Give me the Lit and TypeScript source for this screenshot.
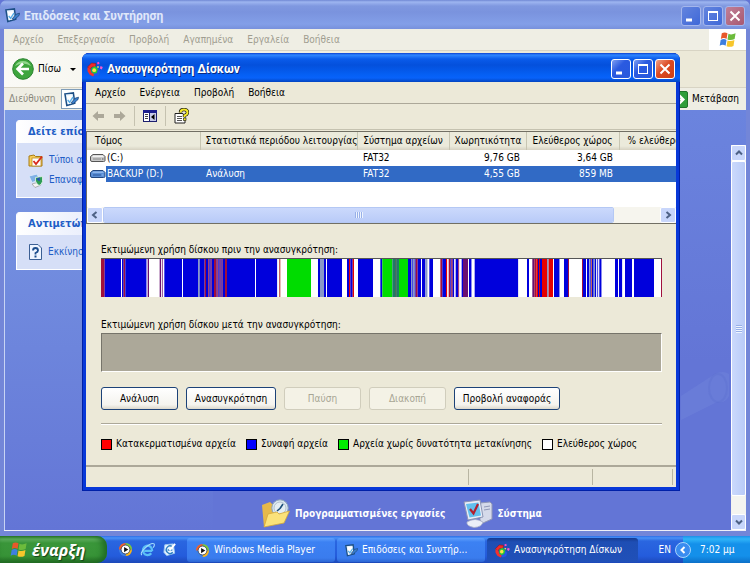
import { LitElement, html, css, svg, nothing, TemplateResult } from "lit";
import { customElement, property } from "lit/decorators.js";

/* ---------- shared look ---------- */

const base = css`
  * { box-sizing: border-box; }
  button {
    font: inherit;
    color: inherit;
    background: none;
    border: 0;
    padding: 0;
    margin: 0;
    white-space: nowrap;
  }
  svg { display: block; flex: none; }
`;

/* ---------- icons ---------- */

const flag = (size: number) => html`<svg width=${size} height=${size} viewBox="0 0 20 20">
  <path d="M4 3.5Q7 1.5 10 3.5L9 9.5Q6 7.500 3 9.500Z" fill="#e8582a" />
  <path d="M11 4Q14 5.500 18.500 3.500L17.500 9.500Q13.500 11.500 10 10Z" fill="#6cbb3c" />
  <path d="M2.800 10.500Q6 8.500 9 10.500L8 16.500Q5 14.500 1.800 16.500Z" fill="#3f7fe0" />
  <path d="M10 11Q13 12.500 17.300 10.500L16.300 16.800Q12.500 18.500 9 17Z" fill="#f7c62c" />
</svg>`;

const perfIcon = (size: number) => html`<svg width=${size} height=${size} viewBox="0 0 16 16">
  <path d="M1 2L10 1L11.500 12L3 14.500Z" fill="#e4f1fc" stroke="#1c4f86" stroke-width="1.600" />
  <path d="M3 4L8.500 3.500L9.500 11.500L4.500 13Z" fill="#fff" />
  <path d="M4 8.500L6 11L9.500 5.500" fill="none" stroke="#58aee8" stroke-width="1.500" />
  <path d="M7.500 11.500L12 6.500L15.500 5.500L15 8L10 12.500Z" fill="#3b7ecb" stroke="#163e70" stroke-width=".7" />
</svg>`;

const defragIcon = (size: number) => html`<svg width=${size} height=${size} viewBox="0 0 16 16">
  <path d="M4.500 2L9 2.500L8.500 6L5 6L3 8.500L.5 6Z" fill="#f02a2a" stroke="#8a1010" stroke-width=".5" />
  <path d="M.5 6.500L3.500 8L4.500 11.500L8 13L6 15.500L2.500 13.500L.5 10Z" fill="#f4322c" />
  <path d="M4.500 7L8 5L11 8L10 12L7 13L4.500 11Z" fill="#25c936" />
  <path d="M6.500 13L10 12L11 8.500L13 10L12 14L8 15.500Z" fill="#2456e8" />
  <circle cx="7.200" cy="9.200" r="1.900" fill="#ffe04a" />
  <path d="M10 1.500L12 .8L12.500 3L10.500 3.500Z" fill="#ff49c8" />
  <path d="M13.500 5L15.800 6L14.800 8.500L12.800 7.500Z" fill="#f45ad0" />
  <path d="M10.500 5L12 5.500L11.500 7L10 6.500Z" fill="#ffe04a" />
</svg>`;

const driveIcon = (selected: boolean) => html`<svg width="16" height="12" viewBox="0 0 16 12">
  <path d="M3 2.500H13L15 4.500V8.500Q15 9.500 13.500 9.500H2Q.5 9.500 .5 8V4.500Z"
    fill=${selected ? "#5b8fd6" : "#c9c9c9"} stroke=${selected ? "#23477e" : "#555"} />
  <path d="M3.200 3.500H12.800L14 5H2Z" fill=${selected ? "#8fb6ea" : "#f1f1f1"} />
  <path d="M3 7H11" stroke=${selected ? "#2c569a" : "#8a8a8a"} />
  <path d="M12 7H13.500" stroke=${selected ? "#8fb6ea" : "#555"} />
</svg>`;

const mediaIcon = (size: number) => html`<svg width=${size} height=${size} viewBox="0 0 16 16">
  <path d="M8 1A7 7 0 0 1 15 8H8Z" fill="#7cc83c" />
  <path d="M15 8A7 7 0 0 1 8 15V8Z" fill="#f7b51c" />
  <path d="M8 15A7 7 0 0 1 1 8H8Z" fill="#3c7fe6" />
  <path d="M1 8A7 7 0 0 1 8 1V8Z" fill="#f0602a" />
  <circle cx="8" cy="8" r="4.700" fill="#fff" stroke="#24324e" stroke-width=".8" />
  <path d="M6.500 5.200L11 8L6.500 10.800Z" fill="#111" />
</svg>`;

const ieIcon = html`<svg width="15" height="15" viewBox="0 0 16 16">
  <path d="M13 9.500H4.500M13 9.500A5 5 0 1 0 12 12" fill="none" stroke="#5cc0f6" stroke-width="2.300" />
  <path d="M2 14Q-.5 12 6 6Q12 .5 15 2Q16 3.500 14 6" fill="none" stroke="#a8defc" stroke-width="1.100" />
</svg>`;

const desktopIcon = html`<svg width="15" height="15" viewBox="0 0 16 16">
  <path d="M3 3L12 2L13.500 12L5 14.500L2 11Z" fill="#e9f4ff" stroke="#9cc8f0" />
  <path d="M11 5A4 4 0 1 0 11.500 11M6 8.500H11" fill="none" stroke="#2b7fc4" stroke-width="1.500" />
  <path d="M8 9L14 2" stroke="#fff" stroke-width="2" />
</svg>`;

const backIcon = html`<svg width="22" height="22" viewBox="0 0 22 22">
  <circle cx="11" cy="11" r="10.300" fill="#3da53d" stroke="#2b8430" />
  <path d="M3 8A9 9 0 0 1 19 8Q11 3 3 8Z" fill="#8fd68a" />
  <path d="M11 5.500L5.500 11L11 16.500M6 11H17" fill="none" stroke="#fff" stroke-width="2.600" />
</svg>`;

const goIcon = html`<svg width="20" height="17" viewBox="0 0 20 17">
  <rect x=".5" y=".5" width="19" height="16" rx="1.500" fill="#2f9e3a" stroke="#1f7428" />
  <path d="M6 8.500H15M11 4L15.500 8.500L11 13" fill="none" stroke="#fff" stroke-width="2.200" />
</svg>`;

const arrow = (flip: boolean) => html`<svg width="13" height="12" viewBox="0 0 13 12">
  <path d=${flip ? "M7 1L12.500 6L7 11V8H1V4H7Z" : "M6 1L.5 6L6 11V8H12V4H6Z"} fill="#aca899" />
</svg>`;

const paneIcon = html`<svg width="14" height="12" viewBox="0 0 14 12">
  <rect x=".5" y=".5" width="13" height="11" fill="#fff" stroke="#1c1f6e" />
  <path d="M0 1.500H14" stroke="#1c1f8e" stroke-width="3" />
  <path d="M6.500 2V12" stroke="#1c1f6e" />
  <path d="M2 4.500H5M2 6.500H5M2 8.500H5" stroke="#444" />
  <rect x="7" y="3" width="6" height="8" fill="#c8cbe8" />
  <path d="M11.500 4V10L8 7Z" fill="#000" />
</svg>`;

const helpIcon = html`<svg width="15" height="16" viewBox="0 0 15 16">
  <path d="M1 5.500H9L11 8V15H1Z" fill="#fff" stroke="#222" />
  <path d="M3 8.500H8M3 10.500H8M3 12.500H8" stroke="#555" />
  <path d="M6.500 4.500Q6.500 1.500 10 1.500T13.500 4.500Q13.500 6.500 10.500 7.500V9" fill="none" stroke="#111" stroke-width="3.400" />
  <path d="M6.500 4.500Q6.500 1.500 10 1.500T13.500 4.500Q13.500 6.500 10.500 7.500V9" fill="none" stroke="#f5ea2a" stroke-width="2" />
  <rect x="9.500" y="10" width="2.500" height="2.500" fill="#f5ea2a" stroke="#111" stroke-width=".6" />
</svg>`;

const folderCheck = html`<svg width="16" height="15" viewBox="0 0 16 15">
  <path d="M1 3L6 2L7.500 3.500H14V13H1Z" fill="#f7cf5c" stroke="#a87c16" />
  <rect x="4" y="5" width="9" height="8" fill="#fff" stroke="#b98b25" stroke-width=".8" />
  <path d="M5.500 8L8 11L14 3.500" fill="none" stroke="#d8281c" stroke-width="1.800" />
</svg>`;

const restoreIcon = html`<svg width="16" height="15" viewBox="0 0 16 15">
  <path d="M1 3L9 1L12 7L4 9.500Z" fill="#7fb0e6" stroke="#d8e6fa" />
  <path d="M4 11L11 9L13 12L7 14.500Z" fill="#f4f4f4" stroke="#888" stroke-width=".6" />
  <path d="M7.500 4.500L14.500 3.500V8.500Q13.500 12 11 12.500Q8 10.500 7.500 8Z" fill="#2d9c56" stroke="#e8f4ec" stroke-width=".8" />
  <path d="M9 6.500L11 5.500V8" fill="none" stroke="#2450b8" stroke-width="1.500" />
</svg>`;

const questionIcon = html`<svg width="15" height="16" viewBox="0 0 15 16">
  <path d="M1.500 .5H10L13.500 4V15.500H1.500Z" fill="#eef4ff" stroke="#3b5f94" />
  <path d="M5 6.500Q5 4 7.500 4T10 6.500Q10 8 7.500 9V10.500" fill="none" stroke="#1b4c8c" stroke-width="1.800" />
  <rect x="6.500" y="11.500" width="2" height="2" fill="#1b4c8c" />
</svg>`;

const tasksIcon = html`<svg width="30" height="30" viewBox="0 0 30 30">
  <path d="M1 6L9 3L11 5L16 4L18 20L3 28Z" fill="#e6b94a" />
  <circle cx="19" cy="9" r="8.200" fill="#dbe8f2" stroke="#8aa3b8" />
  <circle cx="19" cy="9" r="6" fill="#e4eef4" stroke="#a6b6c4" stroke-width=".8" />
  <path d="M19 9.500L22 5M19 9.500L16 12" stroke="#1c4f78" stroke-width="1.600" />
  <path d="M3 28L7 15L16 13L18 15L28.500 12L23 24Z" fill="#fbe27a" stroke="#d6a838" stroke-width=".8" />
</svg>`;

const systemIcon = html`<svg width="30" height="30" viewBox="0 0 30 30">
  <path d="M17 4L27 3L29 5V20L20 24L17 21Z" fill="#d5daea" stroke="#8f97b6" />
  <path d="M21 8L27 7M21 11L27 10" stroke="#8f97b6" />
  <path d="M4 23Q12 18 20 23Q19 28 11 28.500Q3 27 4 23Z" fill="#eceff8" stroke="#a9b0c8" stroke-width=".8" />
  <path d="M1 3L17 1L20 18L5 21Z" fill="#e9edf7" stroke="#8b94b4" />
  <path d="M3 5L15.500 3.500L18 16.500L6.500 18.500Z" fill="#63c0ee" />
  <path d="M7 10L10.500 14.500L15 5" fill="none" stroke="#b3202e" stroke-width="2.200" />
</svg>`;

const chevron = (dir: "left" | "right" | "up" | "down") => {
  const d = {
    left: "M6.500 2L3 5L6.500 8",
    right: "M3.500 2L7 5L3.500 8",
    up: "M2 6.500L5 3.500L8 6.500",
    down: "M2 3.500L5 6.500L8 3.500",
  }[dir];
  return html`<svg width="10" height="10" viewBox="0 0 10 10">
    <path d=${d} fill="none" stroke="#4d6185" stroke-width="2" />
  </svg>`;
};

/* ---------- window caption ---------- */

@customElement("xp-caption")
export class XpCaption extends LitElement {
  @property() heading = "";
  @property({ attribute: false }) icon: TemplateResult | typeof nothing = nothing;
  @property({ type: Boolean, reflect: true }) inactive = false;

  static styles = [base, css`
    :host {
      display: flex;
      align-items: center;
      gap: 4px;
      height: 29px;
      padding: 2px 5px 0 5px;
      border-radius: 7px 7px 0 0;
      background: linear-gradient(#0a3fd0 0, #2f86ff 2px, #0a5bea 6px, #0450dc 12px, #0560f5 22px, #0862fa 25px, #0344c0 29px);
      color: #fff;
      font: bold 12px/20px Roboto, "Noto Sans", sans-serif;
    }
    :host([inactive]) {
      background: linear-gradient(#7088d4 0, #9db5f0 2px, #7f98e0 6px, #7a93de 12px, #839fe8 24px, #7891dc 29px);
      color: #e0e8fa;
    }
    .title { flex: 1; margin: 0; font: inherit; white-space: nowrap; text-shadow: 1px 1px #0a2a80; }
    :host([inactive]) .title { text-shadow: none; }
    .controls { display: flex; gap: 2px; }
    .control {
      width: 20px;
      height: 20px;
      border: 1px solid #fff;
      border-radius: 3px;
      background: linear-gradient(135deg, #7f9ff2, #2a5ae0 40%, #2858dc);
    }
    .close { background: linear-gradient(135deg, #f0a088, #dc4a22 45%, #cc4018); }
    :host([inactive]) .control { border-color: #a4b6ec; background: linear-gradient(135deg, #6384de, #3f68d8); }
    :host([inactive]) .close { background: linear-gradient(135deg, #c08098, #a85870); }
  `];

  render() {
    return html`${this.icon}
      <h1 class="title">${this.heading}</h1>
      <div class="controls">
        <button class="control" aria-label="Ελαχιστοποίηση">
          <svg width="18" height="18" viewBox="0 0 18 18"><path d="M4 13H10" stroke="#fff" stroke-width="3" /></svg>
        </button>
        <button class="control" aria-label="Μεγιστοποίηση">
          <svg width="18" height="18" viewBox="0 0 18 18">
            <rect x="4.500" y="4.500" width="9" height="9" fill="none" stroke="#fff" />
            <path d="M4 5H14" stroke="#fff" stroke-width="2" />
          </svg>
        </button>
        <button class="control close" aria-label="Κλείσιμο">
          <svg width="18" height="18" viewBox="0 0 18 18"><path d="M4.500 4.500L13.500 13.500M13.500 4.500L4.500 13.500" stroke="#fff" stroke-width="2" /></svg>
        </button>
      </div>`;
  }
}

/* ---------- disk usage strip ---------- */

const PALETTE: Record<string, string> = {
  r: "#e60000", b: "#0000dc", g: "#00dc00", w: "#ffffff",
  m: "#a0103c", p: "#6a1070", s: "#8898c8", t: "#207868", d: "#0a3c28", k: "#c86464",
};

/* Each entry is a colour key and the position where that run ends. */
const RUNS_A = "m11 b60 w63 b68 m73 b137 w140 p144 w176 p181 w184 p186 w190 b243 w246 b291 s296 b311 m315 b322 m325 b329 m332 b339 m347 b349 m352 b356 m359 b362 m365 b372 m378 b462 w465 b529 w534 k539 w558 g630 w651 b657 s669 b675 w678 b723 w738 b744 r748 b755 r759 w771 b816 w838 b844 g874 t883 d887 t894 g921";
const RUNS_B = "b930 s934 b936 s941 b944 m950 b960 w963 b973 s980 w985 b996 w1018 m1024 b1035 r1039 w1043 m1048 b1051 m1055 b1060 w1064 b1072 m1075 w1082 b1086 p1101 w1104 b1112 w1121 b1252 w1278 b1284 w1294 p1300 m1306 r1311 b1314 r1317 b1323 r1338 s1343 r1356 w1359 b1376 w1389 b1401 m1404 w1443 m1446 b1455 w1458 b1465 s1468 b1470 k1473 b1478 s1482 b1486 w1489 b1492 w1495 b1502 w1542 b1551 w1554 b1564 w1572 b1593 w1599 b1659 w1680 m1683";
const TOTAL = 1683;

@customElement("usage-strip")
export class UsageStrip extends LitElement {
  static styles = [base, css`
    :host { display: block; height: 39px; border-top: 1px solid #555; background: #fff; }
    .strip { width: 100%; height: 100%; }
  `];

  render() {
    let start = 0;
    const bars = `${RUNS_A} ${RUNS_B}`.split(" ").map((run) => {
      const end = Number(run.slice(1));
      const bar = svg`<rect x=${start} width=${end - start} height="1" fill=${PALETTE[run[0]]} />`;
      start = end;
      return bar;
    });
    return html`<svg class="strip" viewBox="0 0 ${TOTAL} 1" preserveAspectRatio="none" role="img"
      aria-label="Χρήση δίσκου">${bars}</svg>`;
  }
}

/* ---------- defragmenter window ---------- */

interface Volume { name: string; status: string; fs: string; size: string; free: string; selected: boolean; }

const VOLUMES: Volume[] = [
  { name: "(C:)", status: "", fs: "FAT32", size: "9,76 GB", free: "3,64 GB", selected: false },
  { name: "BACKUP (D:)", status: "Ανάλυση", fs: "FAT32", size: "4,55 GB", free: "859 MB", selected: true },
];

@customElement("defrag-window")
export class DefragWindow extends LitElement {
  static styles = [base, css`
    :host {
      display: flex;
      flex-direction: column;
      border-radius: 7px 7px 0 0;
      background: #0838d8;
      box-shadow: inset 0 0 0 1px #0020a8;
      color: #000;
    }
    .client {
      flex: 1;
      display: flex;
      flex-direction: column;
      margin: 0 4px 4px;
      background: #ece9d8;
      min-height: 0;
    }
    .menu { display: flex; gap: 14px; height: 22px; padding-left: 9px; border-bottom: 1px solid #aca899; align-items: center; }
    .tools { display: flex; height: 26px; align-items: center; padding: 0 6px 1px; gap: 8px; border-bottom: 1px solid #c5c2b0; }
    .sep { width: 1px; height: 20px; background: #c5c2b0; }
    .list { display: flex; flex-direction: column; height: 93px; border: solid #716f64; border-width: 1px 0 1px 1px; background: #fff; overflow: hidden; margin: 1px 0 0; flex: none; }
    .view { flex: 1; overflow: hidden; }
    table { border-collapse: collapse; table-layout: fixed; width: 660px; }
    th { height: 18px; padding: 0 5px; font-weight: normal; text-align: center; background: linear-gradient(#ebeadb 14px, #d6d2c2); white-space: nowrap; border-right: 1px solid #c7c5b2; }
    th.first { text-align: left; padding-left: 8px; }
    td { height: 16px; padding: 0 6px; white-space: nowrap; line-height: 16px; }
    .name { display: flex; align-items: center; padding: 0 0 0 3px; }
    .label { flex: 1; line-height: 16px; padding-left: 1px; }
    .num { text-align: right; }
    .picked td { background: #316ac5; color: #fff; }
    .picked .name { background: #fff; }
    .picked .label { background: #316ac5; }
    .scroll { display: flex; height: 16px; background: #f6f5ee; }
    .step { display: flex; align-items: center; justify-content: center; width: 16px; background: #c8d6fb; border: 1px solid #fff; border-radius: 2px; }
    .thumb { flex: 1; display: flex; align-items: center; justify-content: center; margin-right: 46px; background: linear-gradient(#cbd9fc, #b9cbf8); border: 1px solid #fff; outline: 1px solid #b4c8f4; outline-offset: -1px; border-radius: 2px; }
    .grip { width: 8px; height: 6px; background: repeating-linear-gradient(90deg, #98b0e8 0 1px, #eef4fe 1px 2px); }
    .body { flex: 1; display: flex; flex-direction: column; padding: 18px 14px 0 15px; min-height: 0; }
    .caption { margin: 0; line-height: 16px; font-weight: normal; font-size: inherit; white-space: nowrap; }
    .after { margin-top: 20px; }
    .empty { height: 39px; flex: none; background: #aca899; border: 1px solid; border-color: #76746a #fff #fff #76746a; }
    .actions { display: flex; gap: 8px; margin-top: 15px; padding-bottom: 13px; border-bottom: 1px solid #aca899; box-shadow: 0 1px #fff; }
    .action { height: 23px; width: 77px; border: 1px solid #1c4278; border-radius: 3px; background: linear-gradient(#fff, #f4f3ee 80%, #dcd8cc); }
    .wide { width: 90px; }
    .wider { width: 106px; }
    .action:disabled { border-color: #d0cdbc; color: #a7a594; background: #f4f2e6; }
    .legend { display: flex; gap: 10px; margin: 12px 0 0; padding: 0; list-style: none; }
    .legend li { display: flex; align-items: center; gap: 4px; line-height: 16px; white-space: nowrap; }
    .swatch { width: 11px; height: 11px; border: 1px solid #000; }
    .red { background: #f00; }
    .blue { background: #00f; }
    .green { background: #0e0; }
    .white { background: #fff; }
    .status { display: flex; height: 22px; border-top: 2px solid #aca899; padding: 2px 3px 2px 0; }
    .status div { border-right: 1px solid #b8b5a2; }
    .s1 { flex: 1; }
    .s2 { width: 124px; }
    .s3 { width: 80px; }
  `];

  render() {
    return html`
      <xp-caption heading="Ανασυγκρότηση Δίσκων" .icon=${defragIcon(16)}></xp-caption>
      <div class="client">
        <nav class="menu">
          ${["Αρχείο", "Ενέργεια", "Προβολή", "Βοήθεια"].map((m) => html`<button>${m}</button>`)}
        </nav>
        <div class="tools">
          <button aria-label="Πίσω">${arrow(false)}</button>
          <button aria-label="Εμπρός">${arrow(true)}</button>
          <span class="sep"></span>
          <button aria-label="Παράθυρο">${paneIcon}</button>
          <span class="sep"></span>
          <button aria-label="Βοήθεια">${helpIcon}</button>
        </div>
        <div class="list">
          <div class="view">
            <table>
              <colgroup>
                <col width="113" /><col width="157" /><col width="92" /><col width="77" /><col width="93" /><col width="128" />
              </colgroup>
              <thead>
                <tr>
                  <th class="first">Τόμος</th>
                  <th>Στατιστικά περιόδου λειτουργίας</th>
                  <th>Σύστημα αρχείων</th>
                  <th>Χωρητικότητα</th>
                  <th>Ελεύθερος χώρος</th>
                  <th class="first">% ελεύθερου χώρου</th>
                </tr>
              </thead>
              <tbody>
                ${VOLUMES.map((v) => html`<tr class=${v.selected ? "picked" : "plain"}>
                  <td class="name">${driveIcon(v.selected)}<span class="label">${v.name}</span></td>
                  <td>${v.status}</td>
                  <td>${v.fs}</td>
                  <td class="num">${v.size}</td>
                  <td class="num">${v.free}</td>
                  <td></td>
                </tr>`)}
              </tbody>
            </table>
          </div>
          <div class="scroll">
            <button class="step" aria-label="Κύλιση αριστερά">${chevron("left")}</button>
            <div class="thumb"><span class="grip"></span></div>
            <button class="step" aria-label="Κύλιση δεξιά">${chevron("right")}</button>
          </div>
        </div>
        <div class="body">
          <h2 class="caption">Εκτιμώμενη χρήση δίσκου πριν την ανασυγκρότηση:</h2>
          <usage-strip></usage-strip>
          <h2 class="caption after">Εκτιμώμενη χρήση δίσκου μετά την ανασυγκρότηση:</h2>
          <div class="empty"></div>
          <div class="actions">
            <button class="action">Ανάλυση</button>
            <button class="action wide">Ανασυγκρότηση</button>
            <button class="action" disabled>Παύση</button>
            <button class="action" disabled>Διακοπή</button>
            <button class="action wider">Προβολή αναφοράς</button>
          </div>
          <ul class="legend">
            <li><span class="swatch red"></span>Κατακερματισμένα αρχεία</li>
            <li><span class="swatch blue"></span>Συναφή αρχεία</li>
            <li><span class="swatch green"></span>Αρχεία χωρίς δυνατότητα μετακίνησης</li>
            <li><span class="swatch white"></span>Ελεύθερος χώρος</li>
          </ul>
        </div>
        <div class="status"><div class="s1"></div><div class="s2"></div><div class="s3"></div></div>
      </div>`;
  }
}

/* ---------- explorer window ---------- */

@customElement("explorer-window")
export class ExplorerWindow extends LitElement {
  static styles = [base, css`
    :host { display: flex; flex-direction: column; background: #7386d8; border-radius: 7px 7px 0 0; color: #000; }
    .client { flex: 1; display: flex; flex-direction: column; margin: 0 4px 5px; min-height: 0; border-bottom: 1px solid #eef0f8; }
    .menu { display: flex; height: 22px; background: #efeee4; border-bottom: 1px solid #d8d4c4; color: #a09d90; }
    .items { flex: 1; display: flex; align-items: center; gap: 14px; padding-left: 9px; }
    .brand { width: 37px; background: #fff; display: flex; align-items: center; justify-content: center; }
    .tools { display: flex; height: 37px; align-items: center; gap: 4px; padding-left: 8px; background: linear-gradient(90deg, #fafaf6, #ece9d8 60%); border-bottom: 1px solid #d8d4c4; }
    .back { display: flex; align-items: center; gap: 4px; }
    .drop { margin-left: 5px; border: solid transparent; border-width: 3px 3px 0; border-top-color: #000; }
    .address { display: flex; height: 22px; align-items: center; gap: 4px; padding: 0 7px 0 5px; background: #efeee4; color: #8a887c; }
    .field { flex: 1; display: flex; align-items: center; height: 20px; padding-left: 2px; gap: 3px; border: 1px solid #7f9db9; background: #fff; margin-left: 2px; }
    .field input { flex: 1; min-width: 0; border: 0; padding: 0; font: inherit; }
    .go { display: flex; align-items: center; gap: 4px; color: #000; }
    .body { flex: 1; display: flex; min-height: 0; background: linear-gradient(#6b84de, #6375d6 60%); }
    .side { width: 209px; padding: 10px 12px 0 11px; border-left: 1px solid #c8d4f4; background: linear-gradient(#7a9ae4, #6375d6); display: flex; flex-direction: column; gap: 14px; }
    .panel { color: #215dc6; border: 1px solid #fff; border-top: 0; border-radius: 4px 4px 0 0; background: #d6dff7; overflow: hidden; }
    .panel h2 { margin: 0; height: 23px; padding-left: 11px; background: linear-gradient(90deg, #fff, #c6d3f7); color: #215dc6; font: bold 11px/24px "DejaVu Sans Condensed", sans-serif; white-space: nowrap; }
    .panel ul { margin: 0; padding: 7px 11px; list-style: none; }
    .panel li { height: 20px; }
    .link { display: flex; align-items: center; gap: 5px; color: inherit; text-decoration: none; white-space: nowrap; line-height: 20px; }
    .main { flex: 1; display: flex; align-items: flex-end; padding: 0 0 0 48px; gap: 18px; min-width: 0; }
    .category { display: flex; align-items: center; gap: 4px; height: 32px; color: #fff; text-decoration: none; font-weight: bold; white-space: nowrap; }
    .mark { align-self: flex-end; margin: 0 0 104px auto; }
    .scroll { width: 15px; margin-top: 35px; display: flex; flex-direction: column; background: #f4f4f0; }
    .step { display: flex; align-items: center; justify-content: center; height: 16px; background: #c8d6fb; border: 1px solid #fff; border-radius: 2px; }
    .thumb { flex: 1; display: flex; align-items: center; justify-content: center; margin-bottom: 18px; background: linear-gradient(90deg, #cbd9fc, #b9cbf8); border: 1px solid #fff; border-radius: 2px; }
    .grip { width: 6px; height: 8px; background: repeating-linear-gradient(#98b0e8 0 1px, #eef4fe 1px 2px); }
  `];

  render() {
    return html`
      <xp-caption inactive heading="Επιδόσεις και Συντήρηση" .icon=${perfIcon(15)}></xp-caption>
      <div class="client">
        <div class="menu">
          <nav class="items">
            ${["Αρχείο", "Επεξεργασία", "Προβολή", "Αγαπημένα", "Εργαλεία", "Βοήθεια"].map((m) => html`<button>${m}</button>`)}
          </nav>
          <div class="brand">${flag(19)}</div>
        </div>
        <div class="tools">
          <button class="back">${backIcon}Πίσω<span class="drop"></span></button>
        </div>
        <div class="address">
          <label for="addr">Διεύθυνση</label>
          <div class="field">${perfIcon(15)}<input id="addr" value="Επιδόσεις και Συντήρηση" /></div>
          <button class="go">${goIcon}Μετάβαση</button>
        </div>
        <div class="body">
          <aside class="side">
            <section class="panel">
              <h2>Δείτε επίσης</h2>
              <ul>
                <li><a class="link" href="#types">${folderCheck}Τύποι αρχείων</a></li>
                <li><a class="link" href="#restore">${restoreIcon}Επαναφορά</a></li>
              </ul>
            </section>
            <section class="panel">
              <h2>Αντιμετώπιση</h2>
              <ul>
                <li><a class="link" href="#start">${questionIcon}Εκκίνηση</a></li>
              </ul>
            </section>
          </aside>
          <main class="main">
            <a class="category" href="#tasks">${tasksIcon}Προγραμματισμένες εργασίες</a>
            <a class="category" href="#system">${systemIcon}Σύστημα</a>
            <svg class="mark" width="50" height="56" viewBox="0 0 50 56">
              <path d="M0 26L34 4Q42 0 48 4V26Q44 34 36 32L0 50Z" fill="#7386dc" opacity=".4" />
              <ellipse cx="37" cy="18" rx="9" ry="14" fill="none" stroke="#5a6ccc" stroke-width="2" opacity=".3" />
            </svg>
          </main>
          <div class="scroll">
            <button class="step" aria-label="Κύλιση επάνω">${chevron("up")}</button>
            <div class="thumb"><span class="grip"></span></div>
            <button class="step" aria-label="Κύλιση κάτω">${chevron("down")}</button>
          </div>
        </div>
      </div>`;
  }
}

/* ---------- taskbar ---------- */

@customElement("task-bar")
export class TaskBar extends LitElement {
  static styles = [base, css`
    :host {
      display: flex;
      align-items: stretch;
      height: 27px;
      background: linear-gradient(#2d6fe8 0, #4a92f6 2px, #2a66e0 5px, #245cdc 20px, #1c48b8 27px);
      color: #fff;
    }
    .start {
      display: flex;
      align-items: center;
      gap: 4px;
      width: 107px;
      padding-left: 9px;
      border-radius: 0 10px 10px 0;
      background: linear-gradient(#2c7c2c 0, #62b462 3px, #3a963a 7px, #379337 20px, #226b22 27px);
      box-shadow: inset -4px 0 6px #1f6a24;
      font: italic bold 16px/24px "Open Sans", "Noto Sans", sans-serif;
      text-shadow: 1px 1px 1px #12401a;
    }
    .quick { display: flex; align-items: center; gap: 7px; width: 80px; padding-left: 11px; }
    .tasks { flex: 1; display: flex; gap: 2px; padding: 2px 0 1px; min-width: 0; }
    .task {
      display: flex;
      align-items: center;
      gap: 4px;
      flex: 0 1 148px;
      min-width: 0;
      padding-left: 8px;
      border-radius: 3px;
      background: linear-gradient(#5fa0fc 0, #3c81f3 4px, #3a7cee 20px, #2c66d4);
    }
    .active { flex-basis: 151px; background: linear-gradient(#163a90 0, #1e4eb4 4px, #2050b8); }
    .lang { display: flex; align-items: center; padding: 0 12px 0 4px; }
    .tray { display: flex; align-items: center; width: 67px; background: linear-gradient(#1c90e8 0, #30b4f8 3px, #1490ea 8px, #1490ea 20px, #0c70c8); }
    .expand { display: flex; align-items: center; justify-content: center; width: 16px; height: 16px; margin: 0 9px 0 -8px; border-radius: 8px; background: #3a8cf0; border: 1px solid #a8d4fc; }
  `];

  render() {
    return html`
      <button class="start">${flag(19)}έναρξη</button>
      <div class="quick">
        <button aria-label="Media Player">${mediaIcon(15)}</button>
        <button aria-label="Internet Explorer">${ieIcon}</button>
        <button aria-label="Επιφάνεια εργασίας">${desktopIcon}</button>
      </div>
      <div class="tasks">
        <button class="task">${mediaIcon(15)}Windows Media Player</button>
        <button class="task">${perfIcon(13)}Επιδόσεις και Συντήρ...</button>
        <button class="task active">${defragIcon(15)}Ανασυγκρότηση Δίσκων</button>
      </div>
      <button class="lang">EN</button>
      <div class="tray">
        <button class="expand" aria-label="Εμφάνιση κρυφών εικονιδίων">
          <svg width="10" height="10" viewBox="0 0 10 10"><path d="M6.500 2L3.500 5L6.500 8" fill="none" stroke="#fff" stroke-width="2" /></svg>
        </button>
        <time>7:02 μμ</time>
      </div>`;
  }
}

/* ---------- desktop ---------- */

@customElement("app-root")
export class AppRoot extends LitElement {
  static styles = css`
    :host {
      display: flex;
      flex-direction: column;
      position: relative;
      min-height: 100vh;
      overflow: hidden;
      background: #6375d6;
      font: 10px/14px "DejaVu Sans Condensed", "Noto Sans", sans-serif;
    }
    .explorer { flex: 1; }
    .defrag { position: absolute; top: 53px; right: 70px; bottom: 72px; left: 82px; }
  `;

  render() {
    return html`
      <explorer-window class="explorer"></explorer-window>
      <task-bar></task-bar>
      <defrag-window class="defrag"></defrag-window>`;
  }
}
